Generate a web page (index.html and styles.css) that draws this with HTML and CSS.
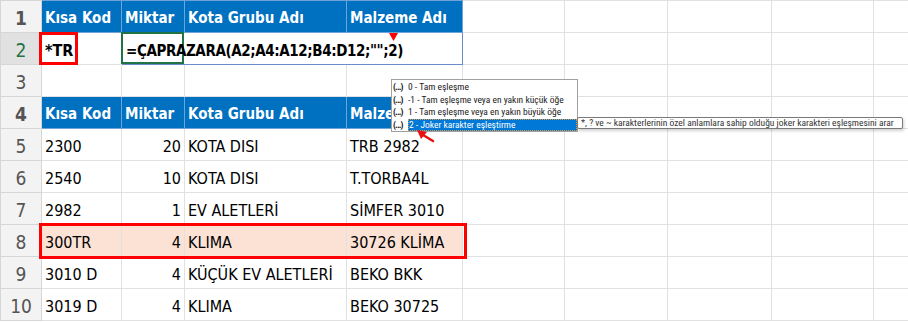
FILE: index.html
```html
<!DOCTYPE html>
<html lang="tr">
<head>
    <meta charset="UTF-8">
    <title>ÇAPRAZARA joker karakter</title>
    <link rel="stylesheet" href="styles.css">
</head>
<body>
    <div class="sheet-wrap">
        <table class="sheet">
            <colgroup>
                <col class="c-rh"><col class="c-a"><col class="c-b"><col class="c-c"><col class="c-d">
                <col class="c-e"><col class="c-f"><col class="c-g"><col class="c-h"><col class="c-i">
            </colgroup>
            <tr class="hdr">
                <td class="rh">1</td>
                <td>Kısa Kod</td><td>Miktar</td><td>Kota Grubu Adı</td><td>Malzeme Adı</td>
                <td class="blank"></td><td class="blank"></td><td class="blank"></td><td class="blank"></td><td class="blank"></td>
            </tr>
            <tr>
                <td class="rh sel">2</td>
                <td class="bold">*TR</td>
                <td class="edit" colspan="3">
                    <span class="active-cell"></span>
                    <span class="formula">=ÇAPRAZARA(A2;A4:A12;B4:D12;"";2)</span>
                </td>
                <td></td><td></td><td></td><td></td><td></td>
            </tr>
            <tr>
                <td class="rh">3</td>
                <td></td><td></td><td></td><td></td><td></td><td></td><td></td><td></td><td></td>
            </tr>
            <tr class="hdr">
                <td class="rh">4</td>
                <td>Kısa Kod</td><td>Miktar</td><td>Kota Grubu Adı</td><td>Malzeme Adı</td>
                <td class="blank"></td><td class="blank"></td><td class="blank"></td><td class="blank"></td><td class="blank"></td>
            </tr>
            <tr>
                <td class="rh">5</td>
                <td>2300</td><td class="num">20</td><td>KOTA DISI</td><td>TRB 2982</td>
                <td></td><td></td><td></td><td></td><td></td>
            </tr>
            <tr>
                <td class="rh">6</td>
                <td>2540</td><td class="num">10</td><td>KOTA DISI</td><td>T.TORBA4L</td>
                <td></td><td></td><td></td><td></td><td></td>
            </tr>
            <tr>
                <td class="rh">7</td>
                <td>2982</td><td class="num">1</td><td>EV ALETLERİ</td><td>SİMFER 3010</td>
                <td></td><td></td><td></td><td></td><td></td>
            </tr>
            <tr class="match">
                <td class="rh">8</td>
                <td class="hl">300TR</td><td class="hl num">4</td><td class="hl">KLIMA</td><td class="hl">30726 KLİMA</td>
                <td></td><td></td><td></td><td></td><td></td>
            </tr>
            <tr>
                <td class="rh">9</td>
                <td>3010 D</td><td class="num">4</td><td>KÜÇÜK EV ALETLERİ</td><td>BEKO BKK</td>
                <td></td><td></td><td></td><td></td><td></td>
            </tr>
            <tr>
                <td class="rh">10</td>
                <td>3019 D</td><td class="num">4</td><td>KLIMA</td><td>BEKO 30725</td>
                <td></td><td></td><td></td><td></td><td></td>
            </tr>
        </table>

        <!-- annotations drawn over the sheet -->
        <div class="mark mark-a2"></div>
        <div class="mark mark-row8"></div>

        <svg class="caret" width="9" height="8" viewBox="0 0 9 8">
            <polygon points="0,0 9,0 4.5,8" fill="#f00"/>
        </svg>

        <ul class="autocomplete">
            <li><span class="fx">(...)</span><span>0 - Tam eşleşme</span></li>
            <li><span class="fx">(...)</span><span>-1 - Tam eşleşme veya en yakın küçük öğe</span></li>
            <li><span class="fx">(...)</span><span>1 - Tam eşleşme veya en yakın büyük öğe</span></li>
            <li class="active"><span class="fx">(...)</span><span class="pick">2 - Joker karakter eşleştirme</span></li>
        </ul>

        <div class="tip">*, ? ve ~ karakterlerinin özel anlamlara sahip olduğu joker karakteri eşleşmesini arar</div>

        <svg class="arrow" width="22" height="16" viewBox="0 0 22 16">
            <line x1="9" y1="7" x2="19" y2="13" stroke="#e81010" stroke-width="2.6" stroke-linecap="round"/>
            <polygon points="3,2 13,4 7,11" fill="#e81010"/>
        </svg>
    </div>
</body>
</html>
```

FILE: styles.css
```css
body {
    margin: 0;
    background: #fff;
    font-family: "DejaVu Sans Condensed", "DejaVu Sans", sans-serif;
    font-stretch: condensed;
}
.sheet-wrap {
    position: relative;
    width: 908px;
    height: 322px;
    overflow: hidden;
}
.sheet {
    border-collapse: collapse;
    table-layout: fixed;
    width: 943px;
    border-top: 1px solid #acacac;
}
.c-rh { width: 41px; }
.c-a { width: 80px; }
.c-b { width: 63px; }
.c-c { width: 162px; }
.c-d { width: 116px; }
.c-e { width: 102px; }
.c-f { width: 103px; }
.c-g { width: 104px; }
.c-h { width: 102px; }
.c-i { width: 70px; }

.sheet tr {
    height: 32px;
}
.sheet td {
    padding: 3px 3px 0;
    border: 1px solid #e1e1e1;
    font-size: 16px;
    color: #000;
    white-space: nowrap;
    overflow: hidden;
    vertical-align: middle;
}
.sheet td.rh {
    padding: 2px 0 0;
    text-align: center;
    background: #f3f3f3;
    border-color: #d6d6d6;
    color: #555;
    font-size: 19px;
}
.sheet td.rh.sel {
    background: #e1e1e1;
    color: #217346;
}
.hdr td {
    background: #0070c0;
    color: #fff;
    font-weight: bold;
    font-size: 15px;
    border-color: #6fa2d6;
}
.hdr td.blank {
    background: #fff;
    border-color: #e1e1e1;
}
.num {
    text-align: right;
}
.bold {
    font-weight: bold;
}
.hl {
    background: #fbe2d5;
}

/* formula being typed in B2, spilling into C2:D2 */
.sheet td.edit {
    position: relative;
    overflow: visible;
    border: 1px solid #6b8ccc;
    border-left: none;
    padding-left: 4px;
}
.active-cell {
    position: absolute;
    left: -1px;
    top: -1px;
    width: 63px;
    height: 32px;
    box-sizing: border-box;
    border: 2px solid #217346;
}
.formula {
    position: relative;
    font-weight: bold;
    font-size: 15px;
    letter-spacing: -0.4px;
}

.mark {
    position: absolute;
    box-sizing: border-box;
    border: 3px solid #f00;
}
.mark-a2 {
    left: 39px;
    top: 32px;
    width: 39px;
    height: 33px;
}
.mark-row8 {
    left: 39px;
    top: 223px;
    width: 428px;
    height: 36px;
}
.caret {
    position: absolute;
    left: 389px;
    top: 33px;
}
.arrow {
    position: absolute;
    left: 414px;
    top: 128px;
}

.autocomplete {
    position: absolute;
    left: 391px;
    top: 79px;
    width: 185px;
    margin: 0;
    padding: 1px 0 0;
    list-style: none;
    background: #fff;
    border: 1px solid #a0a0a0;
    font-family: Roboto, sans-serif;
    font-size: 9.5px;
    color: #222;
}
.autocomplete li {
    display: flex;
    height: 12.5px;
    line-height: 12.5px;
    padding-left: 1px;
    white-space: nowrap;
}
.fx {
    flex: 0 0 15px;
    overflow: hidden;
    font-size: 9px;
    font-weight: bold;
    letter-spacing: -0.8px;
    color: #111;
}
.autocomplete li.active .pick {
    flex: 1;
    background: #0078d7;
    color: #fff;
    outline: 1px dotted #e39a3a;
    outline-offset: -1px;
    padding-left: 1px;
}
.tip {
    position: absolute;
    left: 577px;
    top: 117px;
    width: 326px;
    height: 12px;
    box-sizing: border-box;
    padding: 0 3px;
    border: 1px solid #7a7a7a;
    border-radius: 2px;
    background: #fff;
    box-shadow: 1px 2px 3px rgba(0, 0, 0, 0.18);
    font-family: Roboto, sans-serif;
    font-size: 9.5px;
    line-height: 10px;
    color: #333;
    white-space: nowrap;
    overflow: hidden;
}
```
